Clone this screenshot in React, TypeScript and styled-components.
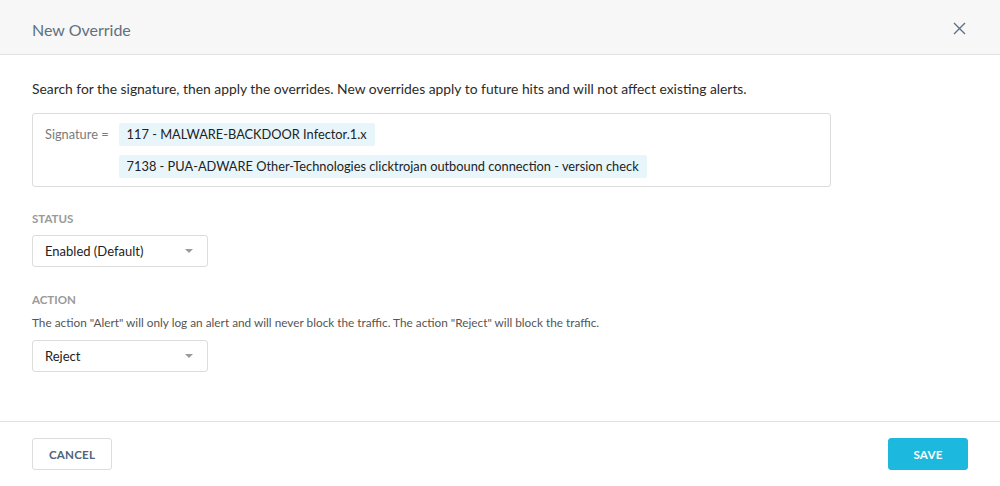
import React from "react";
import styled, { createGlobalStyle } from "styled-components";

const GlobalStyle = createGlobalStyle`
  html, body {
    margin: 0;
    padding: 0;
    background: #fff;
    font-family: Lato, "Open Sans", Arial, sans-serif;
  }
`;

const Modal = styled.div`
  width: 1000px;
  height: 486px;
  display: flex;
  flex-direction: column;
  background: #fff;
`;

const Header = styled.div`
  height: 55px;
  background: #f7f7f7;
  border-bottom: 1px solid #e1e1e1;
  display: flex;
  align-items: center;
  justify-content: space-between;
  padding: 0 31px 0 32px;
  box-sizing: border-box;
  flex-shrink: 0;
`;

const Title = styled.h2`
  margin: 0;
  font-size: 16px;
  font-weight: 400;
  color: #607080;
  padding-top: 4px;
`;

const Close = styled.button`
  border: none;
  background: none;
  padding: 0;
  width: 20px;
  height: 20px;
  display: flex;
  align-items: center;
  justify-content: center;
  cursor: pointer;
  margin-top: 2px;
`;

const Body = styled.div`
  flex: 1;
  padding: 25px 32px 0;
  border-bottom: 1px solid #e1e1e1;
`;

const Intro = styled.p`
  margin: 0 0 15px;
  font-size: 13.85px;
  line-height: 18px;
  color: #2b2b2b;
`;

const SignatureBox = styled.div`
  width: 799px;
  box-sizing: border-box;
  border: 1px solid #dcdcdc;
  border-radius: 3px;
  padding: 9px 12px 8px;
  display: flex;
  gap: 10px;
  margin-bottom: 25px;
`;

const SigLabel = styled.span`
  font-size: 12.8px;
  color: #7a7a7a;
  line-height: 23px;
  white-space: nowrap;
`;

const Chips = styled.div`
  display: flex;
  flex-direction: column;
  align-items: flex-start;
  gap: 9px;
`;

const Chip = styled.span`
  background: #e8f6fc;
  border-radius: 2px;
  padding: 0 8px;
  height: 23px;
  line-height: 23px;
  font-size: 12.8px;
  color: #222;
`;

const Field = styled.div`
  margin-bottom: 26px;
`;

const Label = styled.div`
  font-size: 11.5px;
  font-weight: 700;
  color: #999;
  text-transform: uppercase;
  line-height: 14px;
  margin-bottom: 9px;
`;

const Help = styled.div`
  font-size: 11.8px;
  color: #555;
  line-height: 14px;
  margin: 0 0 10px;
`;

const Select = styled.div`
  width: 176px;
  height: 32px;
  box-sizing: border-box;
  border: 1px solid #dcdcdc;
  border-radius: 3px;
  display: flex;
  align-items: center;
  justify-content: space-between;
  padding: 0 14px 0 12px;
  font-size: 13px;
  color: #222;
`;

const Caret = styled.span`
  width: 0;
  height: 0;
  border-left: 4px solid transparent;
  border-right: 4px solid transparent;
  border-top: 4px solid #9a9a9a;
`;

const Footer = styled.div`
  height: 64px;
  display: flex;
  align-items: flex-start;
  justify-content: space-between;
  padding: 16px 32px 0;
  box-sizing: border-box;
  flex-shrink: 0;
`;

const Button = styled.button<{ $primary?: boolean }>`
  width: 80px;
  height: 32px;
  border-radius: 3px;
  font-family: inherit;
  font-size: 11.6px;
  font-weight: 700;
  letter-spacing: 0.2px;
  cursor: pointer;
  border: 1px solid ${({ $primary }) => ($primary ? "#1db8de" : "#dcdcdc")};
  background: ${({ $primary }) => ($primary ? "#1db8de" : "#fff")};
  color: ${({ $primary }) => ($primary ? "#fff" : "#50647a")};
`;

const App: React.FC = () => (
  <>
    <GlobalStyle />
    <Modal>
      <Header>
        <Title>New Override</Title>
        <Close aria-label="Close">
          <svg width="13" height="13" viewBox="0 0 13 13">
            <path d="M1 1L12 12M12 1L1 12" stroke="#5e7184" strokeWidth="1.4" />
          </svg>
        </Close>
      </Header>
      <Body>
        <Intro>
          Search for the signature, then apply the overrides. New overrides apply to future hits and
          will not affect existing alerts.
        </Intro>
        <SignatureBox>
          <SigLabel>Signature =</SigLabel>
          <Chips>
            <Chip>117 - MALWARE-BACKDOOR Infector.1.x</Chip>
            <Chip>7138 - PUA-ADWARE Other-Technologies clicktrojan outbound connection - version check</Chip>
          </Chips>
        </SignatureBox>
        <Field>
          <Label>Status</Label>
          <Select>
            Enabled (Default)
            <Caret />
          </Select>
        </Field>
        <Field>
          <Label>Action</Label>
          <Help>
            The action "Alert" will only log an alert and will never block the traffic. The action
            "Reject" will block the traffic.
          </Help>
          <Select>
            Reject
            <Caret />
          </Select>
        </Field>
      </Body>
      <Footer>
        <Button>CANCEL</Button>
        <Button $primary>SAVE</Button>
      </Footer>
    </Modal>
  </>
);

export default App;
